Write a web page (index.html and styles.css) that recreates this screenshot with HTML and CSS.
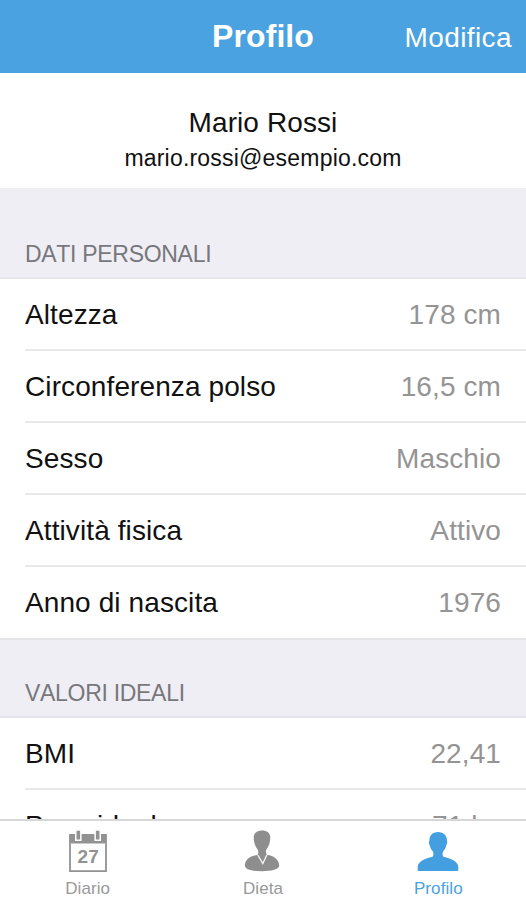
FILE: index.html
```
<!DOCTYPE html>
<html lang="it">
<head>
<meta charset="utf-8">
<title>Profilo</title>
<link rel="stylesheet" href="styles.css">
</head>
<body>
<div class="app">
  <header class="navbar">
    <h1 class="navbar-title">Profilo</h1>
    <a class="navbar-action">Modifica</a>
  </header>
  <main class="content">
    <section class="identity">
      <div class="name">Mario Rossi</div>
      <div class="email">mario.rossi@esempio.com</div>
    </section>
    <h2 class="group-title group-title-first">DATI PERSONALI</h2>
    <ul class="group">
      <li class="row"><span>Altezza</span><span class="value">178 cm</span></li>
      <li class="row"><span>Circonferenza polso</span><span class="value">16,5 cm</span></li>
      <li class="row"><span>Sesso</span><span class="value">Maschio</span></li>
      <li class="row"><span>Attività fisica</span><span class="value">Attivo</span></li>
      <li class="row"><span>Anno di nascita</span><span class="value">1976</span></li>
    </ul>
    <h2 class="group-title">VALORI IDEALI</h2>
    <ul class="group">
      <li class="row"><span>BMI</span><span class="value">22,41</span></li>
      <li class="row"><span>Peso ideale</span><span class="value">71 kg</span></li>
    </ul>
  </main>
  <nav class="tabbar">
    <a class="tab">
      <svg class="icon" viewBox="0 0 44 44">
        <path d="M4.1 4H41.9V14H4.1Z" fill="#929292"/>
        <path d="M5 13.5V41.2H41V13.5" fill="#fff" stroke="#929292" stroke-width="1.8"/>
        <path d="M10 1H16.6V11H10ZM29.4 1H36V11H29.4Z" fill="#fff"/>
        <path d="M11.5 .8H15.1V9.5H11.5ZM30.9 .8H34.5V9.5H30.9Z" fill="#929292"/>
        <text class="day" x="23.2" y="32.5" text-anchor="middle">27</text>
      </svg>
      <span>Diario</span>
    </a>
    <a class="tab">
      <svg class="icon" viewBox="0 0 44 44">
        <path d="M22 0.5C27 0.5 30.5 3 30.3 8C30.1 13 28.5 17 26.5 19.2C25.5 21 25.7 23.5 27 25C34 25.5 39.2 30 39.2 35.5C39.2 39.5 31.5 41.2 22 41.2S4.8 39.5 4.8 35.5C4.8 30 10 25.5 17.5 25C18.5 23.5 18.6 21 17.5 19.2C15.5 17 13.9 13 13.7 8C13.5 3 17 .5 22 .5Z" fill="#8e8e8e"/>
        <path d="M17.8 25L22.8 33.5L26.8 25" fill="none" stroke="#f4f4f4" stroke-width="1.4"/>
      </svg>
      <span>Dieta</span>
    </a>
    <a class="tab tab-active">
      <svg class="icon" viewBox="0 0 44 44">
        <path d="M22 2C27.5 2 31 5.5 31 10.5C31.5 11.5 31.2 14.2 30.2 15.5C29.8 18 28.5 20 27 21.5C26.3 23.5 26.4 25.5 27.5 26.7C35 28.5 41.5 31 42.3 36.5V40C42.3 40.8 41.8 41 41 41H3C2.2 41 1.7 40.8 1.7 40V36.5C2.5 31 9 28.5 16.5 26.7C17.6 25.5 17.7 23.5 17 21.5C15.5 20 14.2 18 13.8 15.5C12.8 14.2 12.5 11.5 13.5 10.5C13.3 5.5 16.5 2 22 2Z" fill="#449fe0"/>
      </svg>
      <span>Profilo</span>
    </a>
  </nav>
</div>
</body>
</html>
```
FILE: styles.css
```
* { box-sizing: border-box; }

body {
  margin: 0;
  font-family: "Liberation Sans", Arial, sans-serif;
  background: #efeef4;
  color: #111;
}

.app {
  display: flex;
  flex-direction: column;
  height: 900px;
  overflow: hidden;
}

.navbar {
  flex: none;
  display: grid;
  grid-template-columns: 1fr auto 1fr;
  align-items: start;
  height: 73px;
  padding: 0 14px;
  background: #4aa2e0;
  color: #fff;
}

.navbar-title {
  grid-column: 2;
  margin: 0;
  padding-top: 16px;
  font-size: 32px;
  line-height: 40px;
  letter-spacing: 0.1px;
}

.navbar-action {
  justify-self: end;
  padding-top: 18px;
  font-size: 28px;
  line-height: 40px;
  letter-spacing: 0.4px;
}

.content {
  flex: 1;
  min-height: 0;
  overflow: hidden;
}

.identity {
  height: 115px;
  padding-top: 32px;
  background: #fff;
  text-align: center;
}

.name {
  font-size: 28px;
  line-height: 36px;
  letter-spacing: 0.1px;
}

.email {
  font-size: 23px;
  line-height: 34px;
  letter-spacing: 0.2px;
}

.group-title {
  height: 80px;
  margin: 0;
  padding: 37px 25px 0;
  border-top: 2px solid #e6e5e8;
  border-bottom: 2px solid #e6e5eb;
  color: #77777c;
  font-size: 23px;
  font-weight: 400;
  line-height: 32px;
  letter-spacing: -0.3px;
  font-kerning: none;
}

.group-title-first {
  height: 91px;
  padding-top: 50px;
  border-top: 0;
}

.group {
  margin: 0;
  padding: 0 0 0 25px;
  background: #fff;
  list-style: none;
}

.row {
  display: flex;
  justify-content: space-between;
  align-items: center;
  height: 72px;
  padding: 2px 25px 0 0;
  border-bottom: 2px solid #e9e9ea;
  font-size: 28px;
  letter-spacing: 0.1px;
}

.row:last-child {
  height: 71px;
  border-bottom-width: 1px;
  border-color: transparent;
}

.value { color: #949494; }

.tabbar {
  flex: none;
  display: grid;
  grid-template-columns: repeat(3, 1fr);
  height: 81px;
  padding-top: 9px;
  border-top: 2px solid #d7d7d7;
  background: #fff;
}

.tab {
  display: flex;
  flex-direction: column;
  align-items: center;
  color: #999;
  font-size: 17px;
  line-height: 20px;
  letter-spacing: 0.1px;
}

.tab-active { color: #4aa2e0; }

.icon {
  width: 44px;
  height: 44px;
  margin: 0 1px 5px 0;
}

.day {
  fill: #929292;
  font-size: 19px;
  font-weight: 700;
}
```
